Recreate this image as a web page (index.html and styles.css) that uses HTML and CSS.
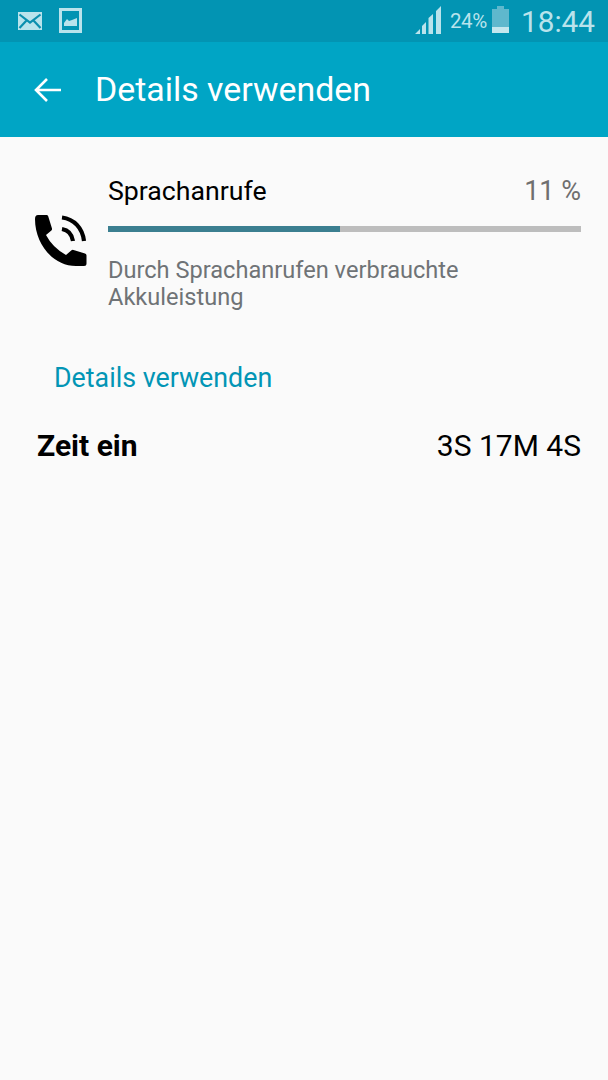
FILE: index.html
```html
<!DOCTYPE html>
<html lang="de">
<head>
<meta charset="utf-8">
<title>Details verwenden</title>
<link rel="stylesheet" href="styles.css">
</head>
<body>
<div class="status">
  <svg class="ic-mail" width="24" height="18" viewBox="0 0 24 18"><rect width="24" height="18" fill="#b9e3ec"/><path d="M1.500 2.500 L12 10.500 L22.500 2.500 M1.500 16 L8.500 8.500 M22.500 16 L15.500 8.500" fill="none" stroke="#0b8fae" stroke-width="2.200"/></svg>
  <svg class="ic-pic" width="23" height="25" viewBox="0 0 23 25"><rect x="1.500" y="1.500" width="20" height="22" fill="none" stroke="#b9e3ec" stroke-width="3"/><path d="M5 18V15L8 11L10 13L13 12L18 10V18Z" fill="#b9e3ec"/></svg>
  <span class="spacer"></span>
  <svg class="ic-signal" width="27" height="28" viewBox="0 0 27 28"><path d="M0 28L5 23V28Z M7 28V20L11 16V28Z M13.500 28V12L18 8V28Z M21 28V5L26 0V28Z" fill="#b9e3ec"/></svg>
  <span class="pct">24%</span>
  <svg class="ic-batt" width="17" height="27" viewBox="0 0 17 27"><rect x="5" y="0" width="7" height="3" fill="#5fb8cd"/><rect y="3" width="17" height="24" fill="#5fb8cd"/><rect y="21" width="17" height="6" fill="#c4e7ee"/></svg>
  <span class="clock">18:44</span>
</div>
<header class="bar">
  <svg width="28" height="26" viewBox="0 0 28 26"><path d="M27 13H2M13 2L2 13L13 24" fill="none" stroke="#fff" stroke-width="2.600"/></svg>
  <h1 class="bar-title">Details verwenden</h1>
</header>
<main class="content">
  <section class="usage">
    <svg class="ic-phone" width="52" height="52" viewBox="0 0 52 52"><path fill="#000" d="M3 1H11.500Q12.800 1 13.200 2.200L17 14.500Q17.300 15.800 16.400 16.600L11 21Q17.500 33.500 31 41L36.500 36.300Q37.400 35.600 38.500 36L50 39.500Q51.500 40 51.500 41.500V49.500Q51.500 52 49 52H41C18 52 0 30 0 5Q0 1 3 1Z"/><path fill="none" stroke="#000" stroke-width="4.200" d="M27 3.500C39 5 47.500 14 49 27M27 15C33 16 37 20.500 38 27"/></svg>
    <div class="usage-body">
      <div class="usage-head"><span class="usage-name">Sprachanrufe</span><span class="usage-pct">11 %</span></div>
      <div class="track"><div class="fill"></div></div>
      <p class="usage-desc">Durch Sprachanrufen verbrauchte Akkuleistung</p>
    </div>
  </section>
  <h2 class="section-title">Details verwenden</h2>
  <div class="row"><span class="row-label">Zeit ein</span><span class="row-value">3S 17M 4S</span></div>
</main>
</body>
</html>
```
FILE: styles.css
```css
* { box-sizing: border-box; }
html, body { margin: 0; padding: 0; }
body { width: 608px; height: 1080px; background: #fafafa; font-family: Roboto, sans-serif; overflow: hidden; }
.status { height: 42px; background: #0294b3; display: flex; align-items: center; padding: 0 13px 0 18px; }
.ic-mail { margin-top: -1px; }
.ic-pic { margin-left: 17px; margin-top: -1px; }
.spacer { flex: 1; }
.ic-signal { margin-top: -2px; }
.pct { margin-left: 8px; color: #b9e3ec; font-size: 20.500px; letter-spacing: -0.3px; }
.ic-batt { margin-left: 5px; margin-top: -3px; }
.clock { margin-left: 12px; color: #b9e3ec; font-size: 29.700px; }
.bar { height: 95px; background: #00a5c5; display: flex; align-items: center; padding: 0 0 0 34px; }
.bar-title { margin: 0 0 0 33px; color: #fff; font-size: 33.900px; font-weight: 400; }
.content { display: flex; flex-direction: column; }
.usage { display: flex; align-items: flex-start; padding: 36px 27px 0 35px; }
.ic-phone { flex: none; margin-top: 41px; }
.usage-body { flex: 1; margin-left: 21px; }
.usage-head { display: flex; justify-content: space-between; align-items: baseline; line-height: 36px; }
.usage-name { font-size: 26.700px; color: #000; }
.usage-pct { font-size: 27px; color: #6f6f6f; }
.track { height: 6px; margin-top: 17px; background: #bdbdbd; }
.fill { width: 49%; height: 100%; background: #3b7f90; }
.usage-desc { margin: 25px 0 0; font-size: 23.600px; line-height: 27px; color: #6f7376; }
.section-title { margin: 49px 0 0 54px; font-size: 26.800px; font-weight: 400; line-height: 36px; color: #0295b5; }
.row { display: flex; justify-content: space-between; align-items: baseline; padding: 0 27px 0 37px; margin-top: 32px; line-height: 36px; }
.row-label { font-size: 30px; font-weight: 700; color: #000; }
.row-value { font-size: 30px; color: #000; }
```
